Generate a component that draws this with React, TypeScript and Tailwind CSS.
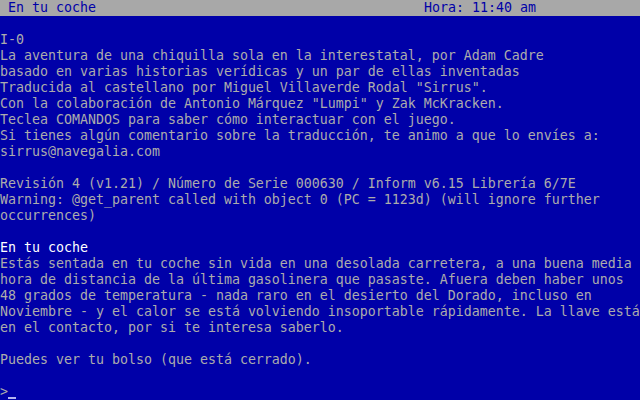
const lines: { text: string; bold?: boolean }[] = [
  { text: '' },
  { text: 'I-0' },
  { text: 'La aventura de una chiquilla sola en la interestatal, por Adam Cadre' },
  { text: 'basado en varias historias verídicas y un par de ellas inventadas' },
  { text: 'Traducida al castellano por Miguel Villaverde Rodal "Sirrus".' },
  { text: 'Con la colaboración de Antonio Márquez "Lumpi" y Zak McKracken.' },
  { text: 'Teclea COMANDOS para saber cómo interactuar con el juego.' },
  { text: 'Si tienes algún comentario sobre la traducción, te animo a que lo envíes a:' },
  { text: 'sirrus@navegalia.com' },
  { text: '' },
  { text: 'Revisión 4 (v1.21) / Número de Serie 000630 / Inform v6.15 Librería 6/7E' },
  { text: 'Warning: @get_parent called with object 0 (PC = 1123d) (will ignore further' },
  { text: 'occurrences)' },
  { text: '' },
  { text: 'En tu coche', bold: true },
  { text: 'Estás sentada en tu coche sin vida en una desolada carretera, a una buena media' },
  { text: 'hora de distancia de la última gasolinera que pasaste. Afuera deben haber unos' },
  { text: '48 grados de temperatura - nada raro en el desierto del Dorado, incluso en' },
  { text: 'Noviembre - y el calor se está volviendo insoportable rápidamente. La llave está' },
  { text: 'en el contacto, por si te interesa saberlo.' },
  { text: '' },
  { text: 'Puedes ver tu bolso (que está cerrado).' },
  { text: '' },
];

export default function App() {
  return (
    <div className="w-[640px] h-[400px] overflow-hidden bg-[#0000a8] text-[#acacac] font-['DejaVu_Sans_Mono',monospace] text-[13.29px] leading-[16px]">
      {/* status bar */}
      <div className="h-4 bg-[#a8a8a8] text-[#0000a8] grid grid-cols-[424px_1fr] whitespace-pre">
        <span> En tu coche</span>
        <span>Hora: 11:40 am</span>
      </div>

      {lines.map((l, i) => (
        <div
          key={i}
          className={`h-4 whitespace-pre overflow-hidden ${l.bold ? 'text-white' : ''}`}
        >
          {l.text}
        </div>
      ))}

      <div className="h-4 whitespace-pre flex">
        <span>&gt;</span>
        <span className="w-2 h-4 relative">
          <span className="absolute left-0 right-0 bottom-[1px] h-[2px] bg-[#b4b4f0]" />
        </span>
      </div>
    </div>
  );
}
